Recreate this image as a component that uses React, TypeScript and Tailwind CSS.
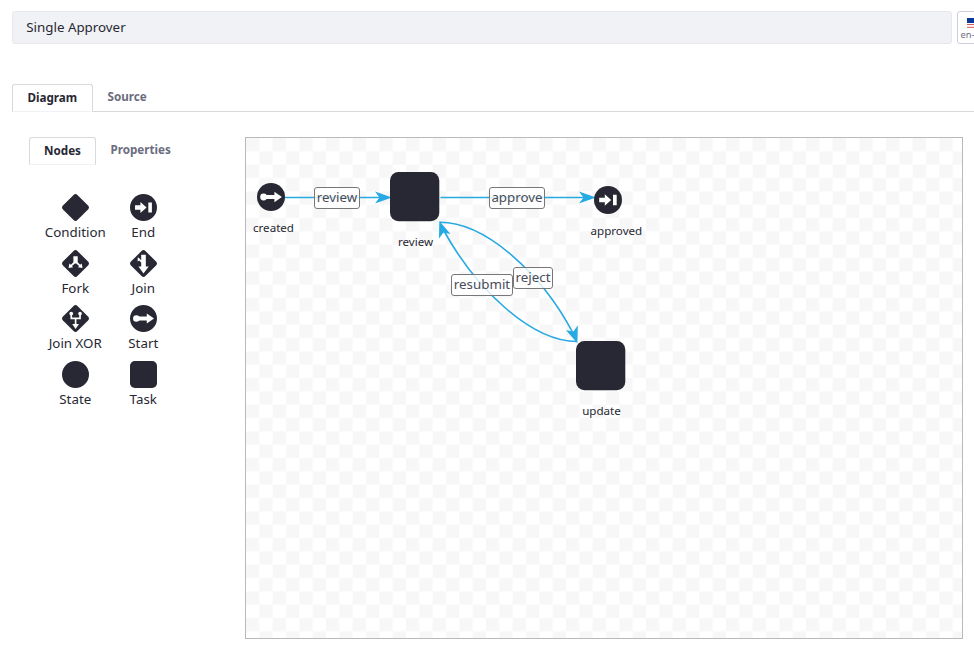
import React from "react";

const INK = "#272833";
const BLUE = "#27a9e3";

function Glyph({ kind }: { kind: string }) {
  const diamond = <rect x="3.4" y="3.4" width="21.2" height="21.2" rx="2.8" transform="rotate(45 14 14)" fill={INK} />;
  const circle = <circle cx="14" cy="14" r="14" fill={INK} />;
  switch (kind) {
    case "condition":
      return diamond;
    case "end":
      return <>{circle}<path d="M5.2 11.700h5.600V8.200l6.400 5.800-6.400 5.800V16.300H5.200zM19 8.700h3.700v10.600H19z" fill="#fff" /></>;
    case "fork":
      return <>{diamond}<path d="M11.800 6.600h4.500v6.200l2.500 2.600 1.600-1.500.9 4.700-4.800-.7 1.300-1.300-3.100-2.700h-1.300l-3.100 2.700 1.300 1.300-4.800.7.900-4.700 1.600 1.500 2.500-2.600z" fill="#fff" /></>;
    case "join":
      return <>{diamond}<path d="M11.600 5h4.800v12h3L14 24.300 8.800 17h2.800v-4l-2.100-2-1.600 1 .2-4.400 1.500 1 2 2z" fill="#fff" /></>;
    case "xor":
      return (
        <>
          {diamond}
          <path d="M9.6 9v4.900h9.100V9M14.100 13.900V21" stroke="#fff" strokeWidth="1.700" fill="none" />
          <circle cx="9.6" cy="9" r="1.900" fill="#fff" />
          <circle cx="18.700" cy="9" r="1.900" fill="#fff" />
          <path d="M10.600 19.800h7l-3.500 5.200z" fill="#fff" />
        </>
      );
    case "start":
      return <>{circle}<circle cx="6.600" cy="14" r="3.400" fill="#fff" /><path d="M7 12h10.400V8.700l7.500 5.300-7.500 5.300V16H7z" fill="#fff" /></>;
    case "state":
      return circle;
    default:
      return <rect width="28" height="28" rx="5" fill={INK} />;
  }
}

const nodes = [
  ["condition", "Condition"], ["end", "End"],
  ["fork", "Fork"], ["join", "Join"],
  ["xor", "Join XOR"], ["start", "Start"],
  ["state", "State"], ["task", "Task"],
];

const captions: [string, string][] = [
  ["created", "left-[-22.5px] top-[82px]"],
  ["review", "left-[119.5px] top-[96px]"],
  ["approved", "left-[320.4px] top-[85px]"],
  ["update", "left-[305.5px] top-[265px]"],
];

const labels: [string, string][] = [
  ["review", "left-[68px] top-[49px] w-[46px]"],
  ["approve", "left-[243px] top-[49px] w-[56px]"],
  ["resubmit", "left-[205px] top-[136px] w-[62px]"],
  ["reject", "left-[267px] top-[129px] w-[40px]"],
];

function Canvas() {
  return (
    <div className="relative h-[502px] w-[718px] shrink-0 overflow-hidden border border-[#b9b9b9] bg-white">
      <svg className="absolute left-0 top-0" width="716" height="500" viewBox="246 138 716 500">
        <defs>
          <pattern id="checks" x="246" y="138" width="26.667" height="26.667" patternUnits="userSpaceOnUse">
            <path d="M0 0h13.333v13.333H0zM13.333 13.333h13.334v13.334H13.333z" fill="#f7f7f7" />
          </pattern>
        </defs>
        <rect x="246" y="138" width="716" height="500" fill="url(#checks)" />
        <g fill="none" stroke={BLUE} strokeWidth="1.6">
          <path d="M285 197.5H382M440.500 197.500H586" />
          <path d="M440 222.300C486 222.300 542 274 573 333" />
          <path d="M577 341.500C530 341.500 475 287 444 231" />
        </g>
        <g fill={BLUE}>
          <path d="M392 197.500 375 191.500 379.500 197.500 375 203.500z" />
          <path d="M596 197.500 579 191.500 583.500 197.500 579 203.500z" />
          <path d="M439.300 221 439 238.500 443.500 232.500 450.500 234z" />
          <path d="M577.400 343.200 566 330.200 573.400 331.500 577.800 325.500z" />
        </g>
        <svg x="257" y="183" width="28" height="28" viewBox="0 0 28 28"><Glyph kind="start" /></svg>
        <svg x="594" y="186" width="28" height="28" viewBox="0 0 28 28"><Glyph kind="end" /></svg>
        <rect x="390" y="172" width="49.300" height="49.300" rx="8.500" fill={INK} />
        <rect x="576" y="341" width="49.300" height="49.300" rx="8.500" fill={INK} />
      </svg>
      {captions.map(([text, place]) => (
        <span key={text} className={`absolute w-[100px] text-center text-[11.6px] leading-4 ${place}`}>{text}</span>
      ))}
      {labels.map(([text, place]) => (
        <span key={text} className={`absolute flex h-[22px] items-center justify-center rounded-[3px] border border-[#777] bg-white/80 pb-px text-[13.33px] leading-none text-[#4a4c58] ${place}`}>{text}</span>
      ))}
    </div>
  );
}

export default function App() {
  return (
    <div className="h-[649px] w-[974px] overflow-hidden bg-white pl-3 pt-[11px] font-['Noto_Sans',sans-serif] text-[#272833]">
      <div className="flex gap-[5px]">
        <div className="flex h-[33px] w-[940px] shrink-0 items-center rounded-[3px] border border-[#e7e7ed] bg-[#f1f2f5] pl-[13.3px] text-[13.33px]">Single Approver</div>
        <div className="flex h-[33px] w-[34px] shrink-0 flex-col rounded-[3px] border border-[#cdced9] pl-[3px] pt-[6px] text-[#6b6c7e]">
          <svg className="ml-[6px] shrink-0" width="16" height="10" viewBox="0 0 16 10">
            <path d="M0 0h16v10H0z" fill="#fff" />
            <path d="M0 6.500h16M0 9.300h16" stroke="#d85c55" />
            <path d="M0 0h9v5H0z" fill="#073a99" />
          </svg>
          <span className="-ml-[0.5px] whitespace-nowrap text-[9.300px] leading-[13px]">en-US</span>
        </div>
      </div>
      <div className="mt-10 flex h-7 border-b border-[#d9d9dd] text-[11.67px] font-bold">
        <div className="h-7 w-[81px] rounded-t-[3px] border border-b-[#f1f2f5] border-[#d9d9dd] bg-white pl-[14.5px] leading-[26px]">Diagram</div>
        <div className="pl-[14.500px] leading-[26px] text-[#6b6c7e]">Source</div>
      </div>
      <div className="flex pl-[17px] pt-[25px]">
        <div className="w-[216px] shrink-0">
          <div className="flex text-[11.67px] font-bold">
            <div className="h-7 w-[67px] rounded-t-[3px] border border-b-[#f1f2f5] border-[#d9d9dd] pl-[14px] leading-[26px]">Nodes</div>
            <div className="pl-[14.500px] leading-[26px] text-[#6b6c7e]">Properties</div>
          </div>
          <div className="ml-3 mt-[29px] grid grid-cols-[68px_68px] auto-rows-[55.667px]">
            {nodes.map(([kind, name]) => (
              <div key={kind} className="flex flex-col items-center">
                <svg width="27" height="27" viewBox="0 0 28 28"><Glyph kind={kind} /></svg>
                <span className="whitespace-nowrap pl-[0.5px] text-[13.33px] leading-[22.5px]">{name}</span>
              </div>
            ))}
          </div>
        </div>
        <Canvas />
      </div>
    </div>
  );
}
